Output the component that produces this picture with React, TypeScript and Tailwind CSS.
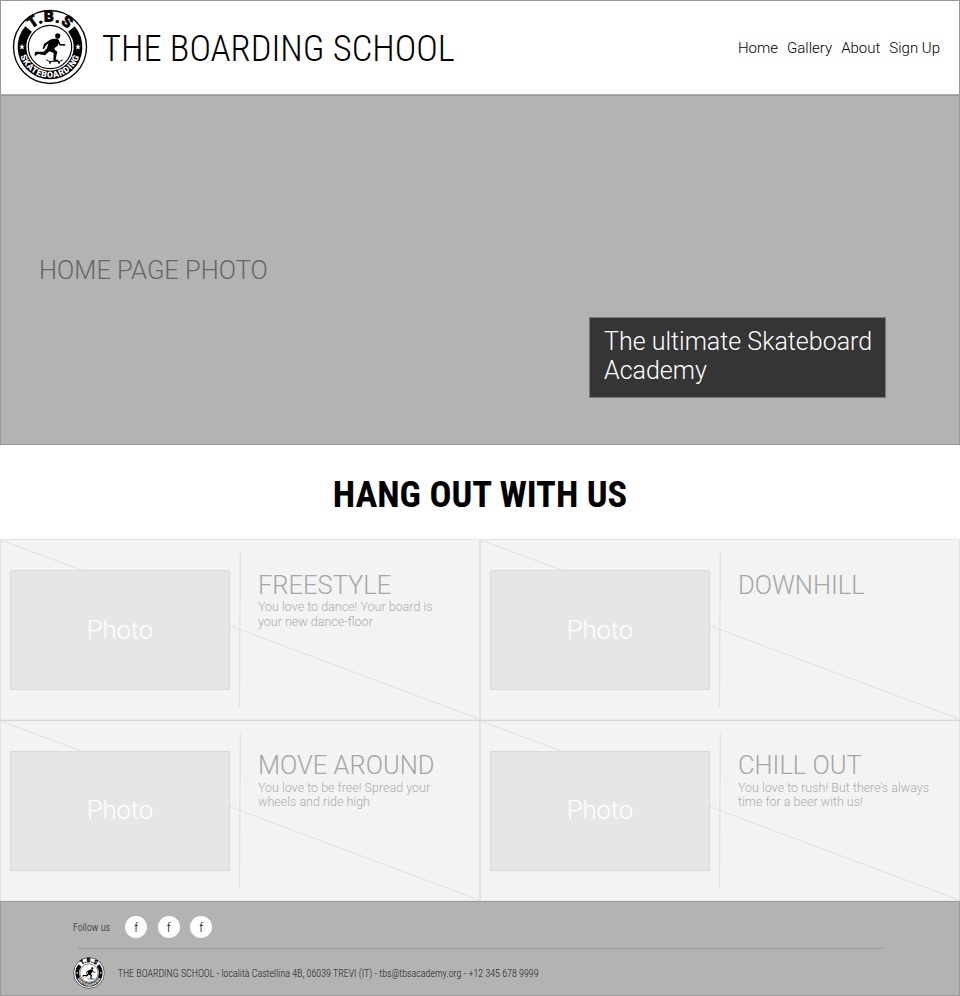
import React from "react";

function Logo({ className, id }: { className: string; id: string }) {
  return (
    <svg viewBox="12 10 228 228" className={`${className} shrink-0 overflow-visible`} aria-label="T.B.S Skateboarding">
      <defs>
        <path id={`${id}-top`} d="M 50 124 A 76 76 0 0 1 202 124" />
        <path id={`${id}-bottom`} d="M 33.500 124 A 92.500 92.500 0 0 0 218.500 124" />
      </defs>
      <circle cx="126" cy="124" r="109.500" fill="#fff" stroke="#000" strokeWidth="4" />
      <path d="M 61.700 70 A 84 84 0 1 0 190.300 70" fill="none" stroke="#000" strokeWidth="26" />
      <circle cx="126" cy="124" r="65" fill="#fff" stroke="#000" strokeWidth="3.500" />
      <text fontFamily="Roboto, sans-serif" fontWeight="900" fontSize="46" stroke="#000" strokeWidth="2" textAnchor="middle" letterSpacing="2.500">
        <textPath href={`#${id}-top`} startOffset="50.500%">T.B.S</textPath>
      </text>
      <text fontFamily="Roboto, sans-serif" fontWeight="900" fontSize="26" fill="#fff" textAnchor="middle" letterSpacing="2">
        <textPath href={`#${id}-bottom`} startOffset="50%">SKATEBOARDING</textPath>
      </text>
      <path d="M42 116l2 5 5 .5-4 3.500 1.500 5.500-4.500-3-4.500 3 1.500-5.500-4-3.500 5-.5zM210 116l2 5 5 .5-4 3.500 1.500 5.500-4.500-3-4.500 3 1.500-5.500-4-3.500 5-.5z" fill="#fff" stroke="#fff" />
      <ellipse cx="149" cy="91" rx="7.500" ry="8" />
      <path d="M143 86l14 1 1 3-14-1z" />
      <path d="M136 99L149 99L154 106L149 120L139 128L141 133L148 138L143 161L151 163L150 166L136 165L137 142L124 137L111 149L90 145L83 150L79 149L82 138L107 138L117 128L121 113L113 120L108 130L104 129L108 115L126 102Z" />
      <path d="M149 104L156 117L170 118" fill="none" stroke="#000" strokeWidth="5" strokeLinecap="round" strokeLinejoin="round" />
      <path d="M115 162L123 167H155L164 163" fill="none" stroke="#000" strokeWidth="3" />
      <circle cx="126" cy="171" r="3" />
      <circle cx="153" cy="171" r="3" />
    </svg>
  );
}

const condensed = "font-['Roboto_Condensed','Roboto',sans-serif] [font-stretch:75%]";

const topRow = { edge: "border-t-[#e2e2e2]", offset: "pt-[30px]", gap: "", label: "" };
const bottomRow = { edge: "border-t-[#d6d6d6]", offset: "pt-[29px]", gap: "pt-[0.600px]", label: "pb-[2px]" };

const cards = [
  { ...topRow, title: "FREESTYLE", lines: ["You love to dance! Your board is", "your new dance-floor"] },
  { ...topRow, title: "DOWNHILL", lines: [] },
  { ...bottomRow, title: "MOVE AROUND", lines: ["You love to be free! Spread your", "wheels and ride high"] },
  { ...bottomRow, title: "CHILL OUT", lines: ["You love to rush! But there’s always", "time for a beer with us!"] },
];

type CardProps = { title: string; lines: string[]; edge: string; offset: string; gap: string; label: string };

function Card({ title, lines, edge, offset, gap, label }: CardProps) {
  return (
    <article className={`relative flex h-[181px] w-[480px] border border-[#e2e2e2] border-b-[#eaeaea] bg-[#f3f3f3] ${edge}`}>
      <svg className="absolute inset-0 h-full w-full" viewBox="0 0 478 179" preserveAspectRatio="none">
        <path d="M0 0L478 179" stroke="#dfdfdf" strokeWidth="1" />
        <path d="M239.300 13L238.500 167" stroke="#e0e0e0" strokeWidth="1.200" />
      </svg>
      <div className={`relative mt-[30px] ml-[9px] flex h-[120px] w-[220px] items-center justify-center border border-[#d9d9d9] bg-[#e6e6e6] text-[25.500px] leading-[30px] text-white ${label}`}>
        Photo
      </div>
      <div className={`relative ml-[28px] whitespace-nowrap ${offset}`}>
        <h3 className="text-[25.500px] leading-[30px] text-[#a6a6a6]">{title}</h3>
        <p className={`text-[12.500px] leading-[14.500px] text-[#acacac] ${gap}`}>
          {lines.map((line) => (
            <span key={line} className="block">{line}</span>
          ))}
        </p>
      </div>
    </article>
  );
}

export default function App() {
  return (
    <div className="h-[996px] w-[960px] overflow-hidden bg-white font-['Roboto',sans-serif] font-light text-black">
      <header className="flex h-[95px] items-center border border-[#999] border-b-[#adadad] pr-[19px] pl-[10.500px]">
        <Logo id="header-logo" className="-mt-[1.500px] size-[76px]" />
        <h1 className={`${condensed} mt-[2px] ml-[14.500px] text-[36.500px] leading-[44px] font-light whitespace-nowrap`}>THE BOARDING SCHOOL</h1>
        <nav className="mt-px ml-auto flex gap-[9px] text-[15px] leading-[20px] whitespace-nowrap">
          <a>Home</a>
          <a>Gallery</a>
          <a>About</a>
          <a>Sign Up</a>
        </nav>
      </header>
      <section className="flex h-[350px] justify-between border border-[#999] bg-[#b3b3b3] pr-[73px] pl-[38px]">
        <p className="mt-[159px] text-[25.500px] leading-[30px] whitespace-nowrap text-[#666]">HOME PAGE PHOTO</p>
        <p className="mt-[221px] h-[81px] w-[297px] border border-[#777] bg-[#353535] pt-[9px] pl-[14px] text-[25px] leading-[29px] whitespace-nowrap text-white">
          The ultimate Skateboard
          <br />
          Academy
        </p>
      </section>
      <h2 className={`${condensed} flex h-[94px] items-center justify-center pt-[6px] text-[36.500px] leading-[44px] font-bold whitespace-nowrap`}>HANG OUT WITH US</h2>
      <section className="grid grid-cols-2">
        {cards.map((card) => (
          <Card key={card.title} {...card} />
        ))}
      </section>
      <footer className={`${condensed} h-[95px] border border-[#999] bg-[#b3b3b3] pl-[72px] text-[10px] text-[#1a1a1a]`}>
        <div className="flex h-[46px] items-center pt-[4.500px]">
          <span className="w-[52.300px] whitespace-nowrap">Follow us</span>
          <div className="flex gap-[10.500px]">
            {[0, 1, 2].map((n) => (
              <span key={n} className="flex size-[22px] items-center justify-center rounded-full bg-white font-['Roboto'] text-[13px] text-black">f</span>
            ))}
          </div>
        </div>
        <div className="ml-[5px] h-px w-[805px] bg-[#999]" />
        <div className="flex h-[47px] items-center">
          <Logo id="footer-logo" className="size-[32px]" />
          <span className="ml-[12.700px] pt-[2px] whitespace-nowrap">THE BOARDING SCHOOL - località Castellina 4B, 06039 TREVI (IT) - tbs@tbsacademy.org - +12 345 678 9999</span>
        </div>
      </footer>
    </div>
  );
}
